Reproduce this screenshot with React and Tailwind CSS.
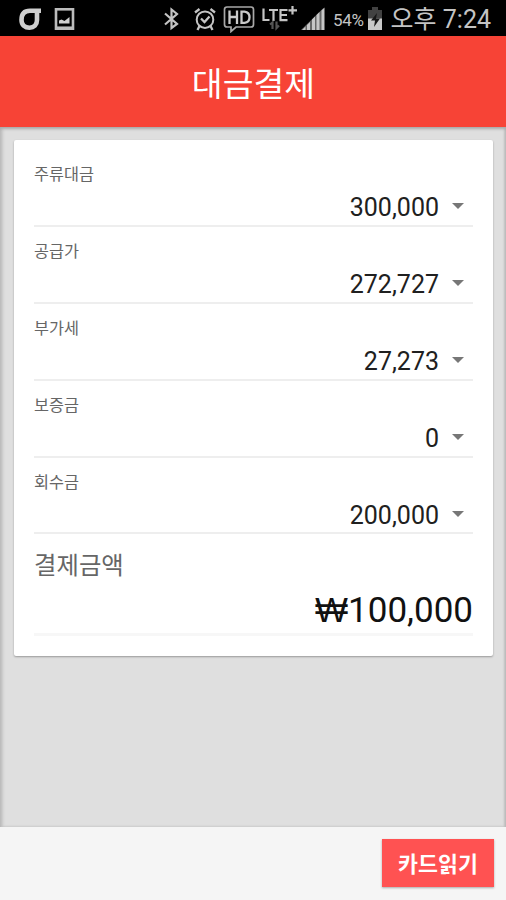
import React from 'react';

const rows = [
  { label: '주류대금', value: '300,000' },
  { label: '공급가', value: '272,727' },
  { label: '부가세', value: '27,273' },
  { label: '보증금', value: '0' },
  { label: '회수금', value: '200,000' },
];

function StatusBar() {
  return (
    <div className="flex h-[36px] shrink-0 items-start bg-black text-[#c4c4c4]">
      <svg className="ml-[18px] mt-[7px] h-[24px] w-[24px]" viewBox="0 0 24 24" fill="none" stroke="#cfcfcf" strokeWidth="4.600">
        <path d="M23 3.800H12C5.500 3.800 3.500 8 3.500 13c0 5 3.500 7.700 8 7.700s7.500-2.700 7.500-7.700V4.500" />
      </svg>
      <svg className="ml-[12px] mt-[7px] h-[24px] w-[22px]" viewBox="0 0 22 24">
        <rect x="2" y="2.300" width="17" height="19.400" fill="none" stroke="#bcbcbc" strokeWidth="2.600" />
        <path d="M2 21.200h17" stroke="#bcbcbc" strokeWidth="3.500" />
        <path d="M5 16.500v-3l2.500-1 3 1.500 5-4v6.500z" fill="#cfcfcf" />
      </svg>
      <svg className="ml-[87px] mt-[7px] h-[24px] w-[18px]" viewBox="0 0 18 24" fill="none" stroke="#c4c4c4" strokeWidth="2.200">
        <path d="M2 6.500l12 10.500-5.500 4V2.500l5.500 4.500-12 10.500" />
      </svg>
      <svg className="ml-[12px] mt-[7px] h-[24px] w-[24px]" viewBox="0 0 24 24" fill="none" stroke="#c4c4c4" strokeWidth="2">
        <circle cx="12" cy="12.700" r="8.300" />
        <path d="M8 11.500l3.500 3.500 5-5.500M2 5.500l4.500-3.500M22 5.500l-4.500-3.500M6.500 19l-2 4M17.500 19l2 4" strokeWidth="2.300" />
      </svg>
      <svg className="ml-[6px] mt-[5px] h-[28px] w-[33px]" viewBox="0 0 33 28" fill="none" stroke="#a8a8a8" strokeWidth="1.700">
        <path d="M4 2h24q2.500 0 2.500 2.500v15q0 2.500-2.500 2.500H13l-5 4.500v-4.500H4q-2.500 0-2.500-2.500v-15q0-2.500 2.500-2.500z" />
        <path d="M6.500 5.500v13.500M14 5.500v13.500M6.500 12H14M18.500 6.600v11.300h3q5-.5 5-5.600t-5-5.700z" stroke="#cacaca" strokeWidth="2.300" />
      </svg>
      <svg className="ml-[5px] mt-[5px] h-[26px] w-[36px]" viewBox="0 0 36 26" fill="none">
        <path d="M2.500 3.500v11.500h6M8 5h9M12.500 5v11M26.500 5h-7v10.200h7M19.500 10h6.500M31.500 1v8.500M27.500 5.300h8.500" stroke="#c4c4c4" strokeWidth="2.200" />
        <path d="M9 19.500l2.500-2v6.500M15.500 16.500v6.500l2.500-2.500" stroke="#555" strokeWidth="2.200" />
      </svg>
      <svg className="ml-[4px] mt-[6px] h-[25px] w-[26px]" viewBox="0 0 26 25">
        <path d="M0 24L22.500 2v22z" fill="#666" />
        <path d="M1 24l3.500-3.500V24zM6 19l3-3v8H6zM11 13.500l3-3V24h-3zM15.500 9l3-3v18h-3zM20.500 4.500l3-3V24h-3z" fill="#c6c6c6" />
      </svg>
      <span className="ml-[6px] mt-[10px] w-[32px] whitespace-nowrap font-['Roboto'] text-[17px] leading-[20px] tracking-[-0.3px]">54%</span>
      <svg className="ml-[2px] mt-[7px] h-[25px] w-[17px]" viewBox="0 0 17 25">
        <path d="M5 0h6v3h4v9H1V3h4z" fill="#424242" />
        <path d="M1 11.500h14V23H1z" fill="#c9c9c9" />
        <path d="M10 6l-6 7.500h4L7 20l6-8.500H9z" fill="#171717" />
      </svg>
      <span className="ml-auto mr-[15px] whitespace-pre font-['Roboto','Noto_Sans_CJK_KR',sans-serif] text-[25px] leading-[40px]">오후 7:24</span>
    </div>
  );
}

export default function App() {
  return (
    <div className="flex h-[900px] w-[506px] flex-col overflow-hidden bg-[#dfdfdf] font-['Noto_Sans_CJK_KR',sans-serif]">
      <StatusBar />
      <header className="flex h-[91px] shrink-0 items-center justify-center bg-[#f74336] pl-[1px] pt-[1px] text-[33.5px] leading-[48px] text-white">
        <h1 className="font-normal">대금결제</h1>
      </header>
      <main className="flex-1 px-[14px] pt-[13px] shadow-[inset_0_2px_3px_#aaaaaa,inset_3px_0_3px_#c6c6c6,inset_-2px_0_2px_#c6c6c6]">
        <section className="h-[516px] w-[479px] rounded-[2px] bg-white px-[20px] pt-[10px] shadow-[0_1px_2px_#999999]">
          {rows.map((row) => (
            <div key={row.label} className="flex h-[76.9px] flex-col border-b-2 border-[#eeeeee]">
              <div className="pt-[11px] text-[16.3px] leading-[24px] text-[#666666]">{row.label}</div>
              <div className="flex items-center justify-end pr-[9px] pt-[8px]">
                <span className="font-['Roboto',sans-serif] text-[25px] leading-[30px] text-[#202020]">{row.value}</span>
                <span className="mb-[4px] ml-[13px] h-0 w-0 border-x-[6px] border-t-[6px] border-x-transparent border-t-[#777777]" />
              </div>
            </div>
          ))}
          <div className="flex h-[102px] flex-col border-b-[3px] border-[#f7f7f7]">
            <div className="pt-[12px] text-[24.4px] leading-[36px] text-[#666666]">결제금액</div>
            <div className="pt-[7px] text-right font-['Roboto',sans-serif] text-[35px] leading-[42px] text-[#111111]">
              <span className="font-['Liberation_Sans',sans-serif]">₩</span>100,000
            </div>
          </div>
        </section>
      </main>
      <footer className="flex h-[73px] shrink-0 justify-end bg-[#f5f5f5] pr-[12px] pt-[12px]">
        <button className="h-[48px] w-[112px] bg-[#ff5252] text-[21.7px] font-bold leading-[48px] text-white shadow-[0_1px_2px_#aaaaaa]">카드읽기</button>
      </footer>
    </div>
  );
}
